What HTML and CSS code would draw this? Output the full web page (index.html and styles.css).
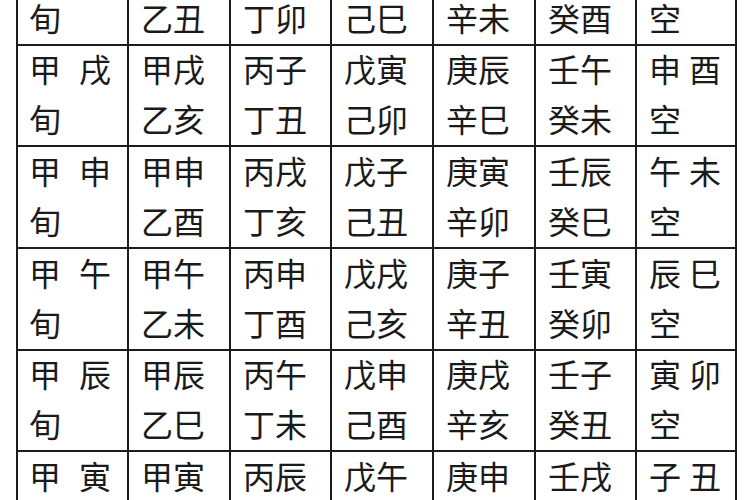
FILE: index.html
```html
<!DOCTYPE html>
<html lang="zh">
<head>
<meta charset="utf-8">
<link rel="stylesheet" href="styles.css">
</head>
<body>
<div class="page">
  <div class="grid">
    <div class="c"><div>甲<span class="g1">子</span></div><div>旬</div></div>
    <div class="c"><div>甲子</div><div>乙丑</div></div>
    <div class="c"><div>丙寅</div><div>丁卯</div></div>
    <div class="c"><div>戊辰</div><div>己巳</div></div>
    <div class="c"><div>庚午</div><div>辛未</div></div>
    <div class="c"><div>壬申</div><div>癸酉</div></div>
    <div class="c"><div>戌<span class="g7">亥</span></div><div>空</div></div>

    <div class="c"><div>甲<span class="g1">戌</span></div><div>旬</div></div>
    <div class="c"><div>甲戌</div><div>乙亥</div></div>
    <div class="c"><div>丙子</div><div>丁丑</div></div>
    <div class="c"><div>戊寅</div><div>己卯</div></div>
    <div class="c"><div>庚辰</div><div>辛巳</div></div>
    <div class="c"><div>壬午</div><div>癸未</div></div>
    <div class="c"><div>申<span class="g7">酉</span></div><div>空</div></div>

    <div class="c"><div>甲<span class="g1">申</span></div><div>旬</div></div>
    <div class="c"><div>甲申</div><div>乙酉</div></div>
    <div class="c"><div>丙戌</div><div>丁亥</div></div>
    <div class="c"><div>戊子</div><div>己丑</div></div>
    <div class="c"><div>庚寅</div><div>辛卯</div></div>
    <div class="c"><div>壬辰</div><div>癸巳</div></div>
    <div class="c"><div>午<span class="g7">未</span></div><div>空</div></div>

    <div class="c"><div>甲<span class="g1">午</span></div><div>旬</div></div>
    <div class="c"><div>甲午</div><div>乙未</div></div>
    <div class="c"><div>丙申</div><div>丁酉</div></div>
    <div class="c"><div>戊戌</div><div>己亥</div></div>
    <div class="c"><div>庚子</div><div>辛丑</div></div>
    <div class="c"><div>壬寅</div><div>癸卯</div></div>
    <div class="c"><div>辰<span class="g7">巳</span></div><div>空</div></div>

    <div class="c"><div>甲<span class="g1">辰</span></div><div>旬</div></div>
    <div class="c"><div>甲辰</div><div>乙巳</div></div>
    <div class="c"><div>丙午</div><div>丁未</div></div>
    <div class="c"><div>戊申</div><div>己酉</div></div>
    <div class="c"><div>庚戌</div><div>辛亥</div></div>
    <div class="c"><div>壬子</div><div>癸丑</div></div>
    <div class="c"><div>寅<span class="g7">卯</span></div><div>空</div></div>

    <div class="c"><div>甲<span class="g1">寅</span></div><div>旬</div></div>
    <div class="c"><div>甲寅</div><div>乙卯</div></div>
    <div class="c"><div>丙辰</div><div>丁巳</div></div>
    <div class="c"><div>戊午</div><div>己未</div></div>
    <div class="c"><div>庚申</div><div>辛酉</div></div>
    <div class="c"><div>壬戌</div><div>癸亥</div></div>
    <div class="c"><div>子<span class="g7">丑</span></div><div>空</div></div>
  </div>
</div>
</body>
</html>
```

FILE: styles.css
```css
html, body {
  margin: 0;
  padding: 0;
  background: #ffffff;
}
body {
  width: 750px;
  height: 500px;
  overflow: hidden;
}
.page {
  padding-left: 16px;
}
.grid {
  margin-top: -58px;
  display: grid;
  grid-template-columns: 111px 102px 101px 102px 102px 101px 100px;
  grid-template-rows: 102px 101px 102px 102px 101px 102px;
  width: max-content;
  border-left: 2px solid #1c1c1c;
  border-top: 2px solid #1c1c1c;
  font-family: "Noto Sans CJK SC", "Noto Sans", sans-serif;
  font-size: 32px;
  line-height: 50px;
  color: #1a1a1a;
}
.c {
  border-right: 2px solid #1c1c1c;
  border-bottom: 2px solid #1c1c1c;
  display: flex;
  flex-direction: column;
  justify-content: center;
  padding-left: 12px;
  padding-bottom: 5px;
  white-space: nowrap;
}
.c:nth-child(7n+1) {
  padding-left: 11px;
}
.g1 {
  margin-left: 18px;
}
.g7 {
  margin-left: 8px;
}
```
